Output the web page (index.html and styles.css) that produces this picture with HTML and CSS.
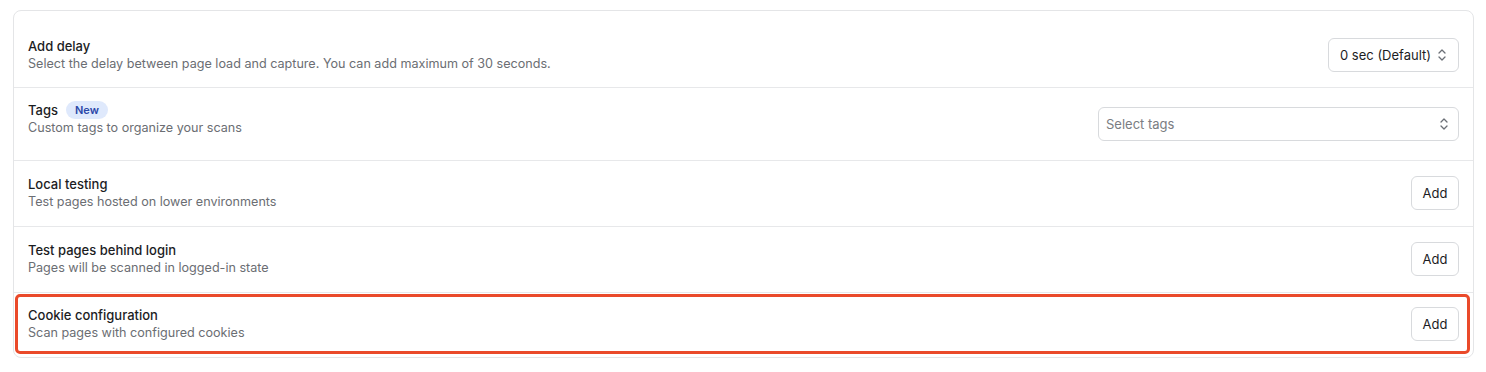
FILE: index.html
```html
<!DOCTYPE html>
<html lang="en">
<head>
<meta charset="utf-8">
<title>Scan settings</title>
<link rel="stylesheet" href="styles.css">
</head>
<body>
<div class="card">
  <div class="row row-first">
    <div class="text">
      <div class="title">Add delay</div>
      <div class="sub">Select the delay between page load and capture. You can add maximum of 30 seconds.</div>
    </div>
    <div class="select select-delay">
      <span class="select-value">0 sec (Default)</span>
      <svg class="chev" width="10" height="14" viewBox="0 0 10 14"><path d="M2 5 L5 2 L8 5 M2 9 L5 12 L8 9" fill="none" stroke="#6b6f76" stroke-width="1.3" stroke-linecap="round" stroke-linejoin="round"/></svg>
    </div>
  </div>
  <div class="row row-tags">
    <div class="text">
      <div class="title">Tags <span class="badge">New</span></div>
      <div class="sub">Custom tags to organize your scans</div>
    </div>
    <div class="select select-tags">
      <span class="placeholder">Select tags</span>
      <svg class="chev" width="10" height="14" viewBox="0 0 10 14"><path d="M2 5 L5 2 L8 5 M2 9 L5 12 L8 9" fill="none" stroke="#6b6f76" stroke-width="1.3" stroke-linecap="round" stroke-linejoin="round"/></svg>
    </div>
  </div>
  <div class="row row-std">
    <div class="text">
      <div class="title">Local testing</div>
      <div class="sub">Test pages hosted on lower environments</div>
    </div>
    <button class="btn">Add</button>
  </div>
  <div class="row row-std">
    <div class="text">
      <div class="title">Test pages behind login</div>
      <div class="sub">Pages will be scanned in logged-in state</div>
    </div>
    <button class="btn">Add</button>
  </div>
  <div class="row row-highlight">
    <div class="text">
      <div class="title">Cookie configuration</div>
      <div class="sub">Scan pages with configured cookies</div>
    </div>
    <button class="btn">Add</button>
  </div>
</div>
</body>
</html>
```

FILE: styles.css
```css
* { box-sizing: border-box; }
html, body { margin: 0; padding: 0; background: #ffffff; }
body { font-family: Inter, "Noto Sans", "Liberation Sans", sans-serif; color: #1c1d1f; }

.card {
  margin: 10px 0 0 13px;
  width: 1461px;
  border: 1px solid #e4e5e7;
  border-radius: 8px;
  background: #fff;
}

.row {
  display: flex;
  align-items: center;
  justify-content: space-between;
  padding-left: 14px;
  padding-right: 14px;
  border-bottom: 1px solid #e7e8ea;
}

.row-first { padding-top: 26px; padding-bottom: 14px; }
.row-tags { align-items: flex-start; padding-top: 13px; padding-bottom: 19px; }
.row-tags .select-tags { margin-top: 6px; }
.row-std { padding-top: 14px; padding-bottom: 15px; }

.row-highlight {
  border: 3px solid #ea4a2a;
  border-radius: 5px;
  margin: 1px 3px 3px 1px;
  padding: 9px 8px 9px 10px;
}

.text { display: flex; flex-direction: column; min-width: 0; }

.title {
  font-size: 13px;
  font-weight: 500;
  line-height: 18px;
  color: #1c1d1f;
  display: flex;
  align-items: center;
}

.sub {
  font-size: 12.6px;
  line-height: 18px;
  color: #6b6e73;
  white-space: nowrap;
}

.badge {
  display: inline-flex;
  align-items: center;
  height: 18px;
  margin-left: 8px;
  padding: 0 9px;
  border-radius: 9px;
  background: #dfe9fc;
  color: #2c47a8;
  font-size: 11px;
  font-weight: 600;
}

.select {
  flex-shrink: 0;
  height: 34px;
  border: 1px solid #d8dadd;
  border-radius: 6px;
  display: flex;
  align-items: center;
  justify-content: space-between;
  font-size: 13px;
  background: #fff;
  white-space: nowrap;
}

.select-delay { width: 131px; padding: 0 12px 0 11px; gap: 6px; }
.select-value { color: #1c1d1f; }
.select-tags { width: 361px; padding: 0 9px 0 7px; }
.placeholder { color: #7a7d82; }
.chev { display: block; flex-shrink: 0; }

.btn {
  flex-shrink: 0;
  height: 34px;
  width: 48px;
  border: 1px solid #d8dadd;
  border-radius: 6px;
  background: #fff;
  font-family: inherit;
  font-size: 13px;
  color: #1c1d1f;
  padding: 0;
}
```
